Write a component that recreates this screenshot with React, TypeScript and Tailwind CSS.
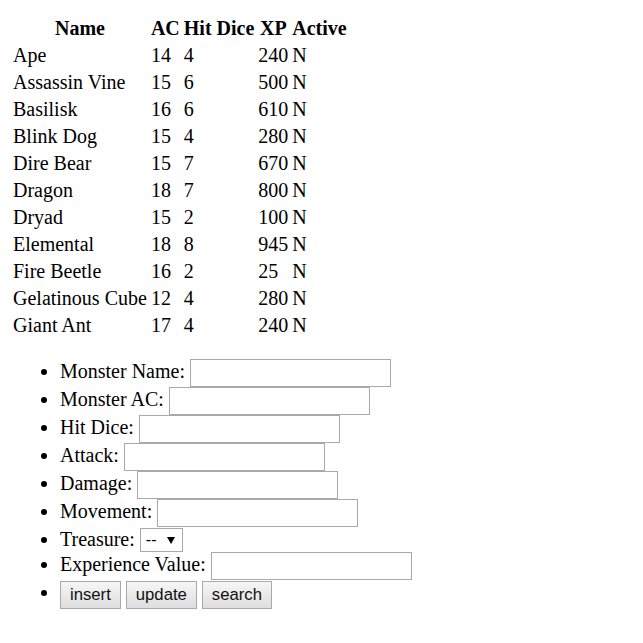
const monsters = [
  { name: 'Ape', ac: 14, hd: 4, xp: 240, active: 'N' },
  { name: 'Assassin Vine', ac: 15, hd: 6, xp: 500, active: 'N' },
  { name: 'Basilisk', ac: 16, hd: 6, xp: 610, active: 'N' },
  { name: 'Blink Dog', ac: 15, hd: 4, xp: 280, active: 'N' },
  { name: 'Dire Bear', ac: 15, hd: 7, xp: 670, active: 'N' },
  { name: 'Dragon', ac: 18, hd: 7, xp: 800, active: 'N' },
  { name: 'Dryad', ac: 15, hd: 2, xp: 100, active: 'N' },
  { name: 'Elemental', ac: 18, hd: 8, xp: 945, active: 'N' },
  { name: 'Fire Beetle', ac: 16, hd: 2, xp: 25, active: 'N' },
  { name: 'Gelatinous Cube', ac: 12, hd: 4, xp: 280, active: 'N' },
  { name: 'Giant Ant', ac: 17, hd: 4, xp: 240, active: 'N' },
];

const fields = ['Monster Name', 'Monster AC', 'Hit Dice', 'Attack', 'Damage', 'Movement'];

function TextField({ label }: { label: string }) {
  return (
    <li className="leading-[24px]">
      {label}:{' '}
      <input
        type="text"
        className="h-[28px] w-[201px] border border-[#a9a9a9] bg-white px-[2px] align-top outline-none"
      />
    </li>
  );
}

function Button({ children }: { children: string }) {
  return (
    <button
      type="button"
      className="mr-[5px] mt-[1px] h-[28px] border border-[#a9a9a9] bg-gradient-to-b from-[#f6f6f6] to-[#dedede] px-[9px] align-top font-['Liberation_Sans',Arial,sans-serif] text-[16.7px] leading-[26px] text-[#111]"
    >
      {children}
    </button>
  );
}

export default function App() {
  return (
    <div className="min-h-screen bg-white p-[10px] pt-[14px] font-['Liberation_Serif','Times_New_Roman',serif] text-[20px] text-black">
      <table className="border-separate border-spacing-[2px] leading-[23px]">
        <thead>
          <tr>
            <th className="p-[1px] font-bold">Name</th>
            <th className="p-[1px] font-bold">AC</th>
            <th className="p-[1px] font-bold">Hit Dice</th>
            <th className="p-[1px] font-bold">XP</th>
            <th className="p-[1px] font-bold">Active</th>
          </tr>
        </thead>
        <tbody>
          {monsters.map((m) => (
            <tr key={m.name}>
              <td className="p-[1px]">{m.name}</td>
              <td className="p-[1px]">{m.ac}</td>
              <td className="p-[1px]">{m.hd}</td>
              <td className="p-[1px]">{m.xp}</td>
              <td className="p-[1px]">{m.active}</td>
            </tr>
          ))}
        </tbody>
      </table>

      <ul className="mt-[19px] list-disc pl-[50px]">
        {fields.map((f) => (
          <TextField key={f} label={f} />
        ))}
        <li className="leading-[24px]">
          Treasure:{' '}
          <span className="relative mt-[1px] inline-block h-[24px] w-[43px] border border-[#a9a9a9] bg-white align-top">
            <span className="absolute left-[5px] top-0 font-['Liberation_Sans',Arial,sans-serif] text-[16px] leading-[22px]">
              --
            </span>
            <svg className="absolute left-[26px] top-[8px]" width="8" height="7" viewBox="0 0 8 7">
              <path d="M0 0h8L4 7z" fill="#000" />
            </svg>
          </span>
        </li>
        <TextField label="Experience Value" />
        <li className="leading-[24px]">
          <Button>insert</Button>
          <Button>update</Button>
          <Button>search</Button>
        </li>
      </ul>
    </div>
  );
}
